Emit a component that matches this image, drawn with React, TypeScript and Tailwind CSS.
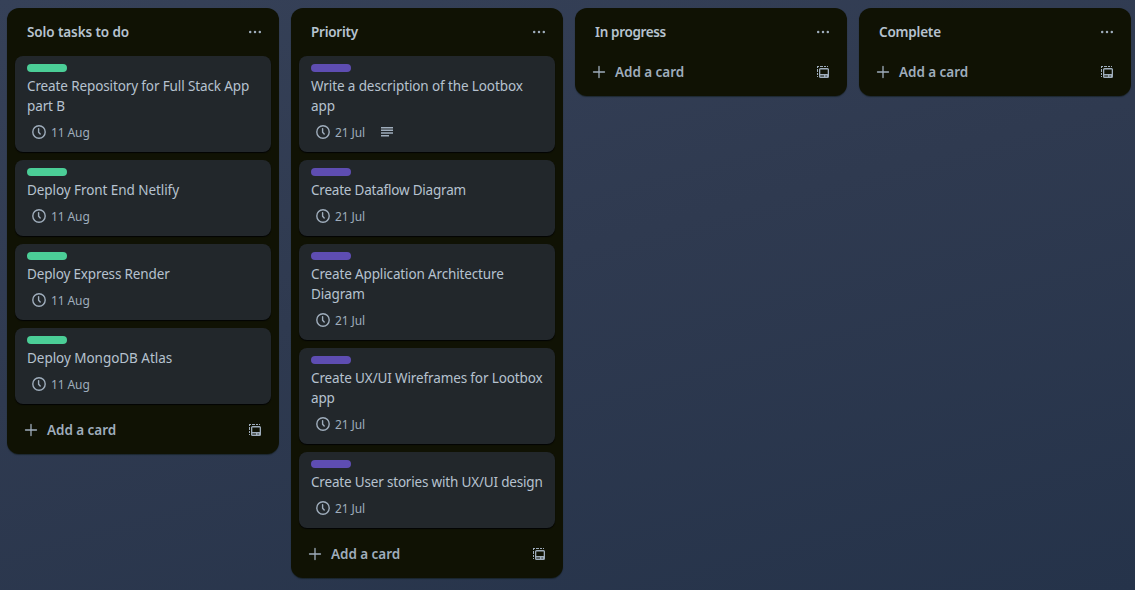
type Card = { title: string[]; due: string; description?: boolean; spacing: string };
type List = { name: string; label: string; spacing: string; cards: Card[] };

const lists: List[] = [
  {
    name: "Solo tasks to do",
    label: "bg-[#4bce97]",
    spacing: "tracking-[-0.1px]",
    cards: [
      { title: ["Create Repository for Full Stack App", "part B"], due: "11 Aug", spacing: "tracking-[-0.12px]" },
      { title: ["Deploy Front End Netlify"], due: "11 Aug", spacing: "tracking-[-0.07px]" },
      { title: ["Deploy Express Render"], due: "11 Aug", spacing: "tracking-[-0.15px]" },
      { title: ["Deploy MongoDB Atlas"], due: "11 Aug", spacing: "tracking-[-0.04px]" },
    ],
  },
  {
    name: "Priority",
    label: "bg-[#5e4db2]",
    spacing: "tracking-[-0.25px]",
    cards: [
      { title: ["Write a description of the Lootbox", "app"], due: "21 Jul", description: true, spacing: "tracking-[-0.11px]" },
      { title: ["Create Dataflow Diagram"], due: "21 Jul", spacing: "tracking-[-0.21px]" },
      { title: ["Create Application Architecture", "Diagram"], due: "21 Jul", spacing: "tracking-[-0.14px]" },
      { title: ["Create UX/UI Wireframes for Lootbox", "app"], due: "21 Jul", spacing: "tracking-[-0.13px]" },
      { title: ["Create User stories with UX/UI design"], due: "21 Jul", spacing: "tracking-[-0.18px]" },
    ],
  },
  { name: "In progress", label: "", spacing: "tracking-[-0.35px]", cards: [] },
  { name: "Complete", label: "", spacing: "tracking-[-0.2px]", cards: [] },
];

function ClockIcon() {
  return (
    <svg width="16" height="16" viewBox="0 0 16 16" fill="none" stroke="currentColor" strokeWidth="1.4">
      <circle cx="8" cy="8" r="6.2" />
      <path d="M7.6 4.6V8.2L9.2 10" strokeLinecap="round" strokeLinejoin="round" />
    </svg>
  );
}

function DescriptionIcon() {
  return (
    <svg width="16" height="16" viewBox="0 0 16 16" fill="currentColor">
      <path d="M2 3h12v1.500H2zM2 5.600h12v1.400H2zM2 8.300h12v1.400H2zM2 11h8v1.400H2z" />
    </svg>
  );
}

function PlusIcon() {
  return (
    <svg width="16" height="16" viewBox="0 0 16 16" fill="none" stroke="currentColor" strokeWidth="1.3" strokeLinecap="round">
      <path d="M8 2.5v11M2.5 8h11" />
    </svg>
  );
}

function MoreIcon() {
  return (
    <svg width="16" height="16" viewBox="0 0 16 16" fill="currentColor">
      <circle cx="3.2" cy="8" r="1.25" />
      <circle cx="8" cy="8" r="1.25" />
      <circle cx="12.8" cy="8" r="1.25" />
    </svg>
  );
}

function TemplateIcon() {
  return (
    <svg width="16" height="16" viewBox="0 0 16 16" fill="currentColor">
      <path d="M2 2h2v1H3v1H2zM5 2h3v1H5zM9 2h2v1H9zM12 2h1v1h-1zM2 5h1v3H2zM2 9h1v2H2zM2 12h1v1H2z" />
      <path
        fillRule="evenodd"
        d="M5.500 4h7A1.500 1.500 0 0 1 14 5.500v7a1.500 1.500 0 0 1-1.500 1.500h-7A1.500 1.500 0 0 1 4 12.500v-7A1.500 1.500 0 0 1 5.500 4zM5.300 5.400v4.600h7.400V5.400zM5.300 11.500v1h3.700v-1zM10.500 11.500v1h1.200v-1z"
      />
    </svg>
  );
}

function TaskCard({ card, label }: { card: Card; label: string }) {
  return (
    <article className="rounded-lg bg-[#22272b] px-3 pt-2 pb-2 shadow-[0_1px_1px_#030404]">
      <div className={`h-2 w-10 rounded-full ${label}`} />
      <h3 className={`mt-1 text-[13.5px] leading-5 whitespace-nowrap text-[#b6c2cf] ${card.spacing}`}>
        {card.title.map((line) => (
          <span key={line} className="block">{line}</span>
        ))}
      </h3>
      <div className="mt-1 flex h-6 items-center pb-px pt-px pl-1 text-xs text-[#9fadbc]">
        <ClockIcon />
        <span className="ml-1 w-11 pt-px tracking-[-0.1px] whitespace-nowrap">{card.due}</span>
        {card.description && <DescriptionIcon />}
      </div>
    </article>
  );
}

function TaskList({ list }: { list: List }) {
  return (
    <section className="w-[272px] shrink-0 rounded-xl bg-[#101204] px-2 pb-2 shadow-[0_1px_1px_#09140f80]">
      <header className="flex h-12 items-center justify-between pr-2 pl-3 text-[#9fadbc]">
        <h2 className={`text-[13.5px] leading-5 font-semibold text-[#b6c2cf] ${list.spacing}`}>{list.name}</h2>
        <MoreIcon />
      </header>
      {list.cards.length > 0 && (
        <div className="mb-2.5 flex flex-col gap-2">
          {list.cards.map((card) => (
            <TaskCard key={card.title[0]} card={card} label={list.label} />
          ))}
        </div>
      )}
      <footer className="flex h-8 items-center px-2 text-[#9fadbc]">
        <PlusIcon />
        <span className="ml-2 flex-1 text-[13.5px] leading-5 font-semibold tracking-[-0.05px]">Add a card</span>
        <TemplateIcon />
      </footer>
    </section>
  );
}

export default function App() {
  return (
    <main className="flex h-[590px] w-[1135px] items-start gap-3 overflow-hidden bg-linear-[165deg,#364158,#2f3a50_45%,#25334a] pt-2 pl-[7px] font-['Noto_Sans',sans-serif]">
      {lists.map((list) => (
        <TaskList key={list.name} list={list} />
      ))}
    </main>
  );
}
